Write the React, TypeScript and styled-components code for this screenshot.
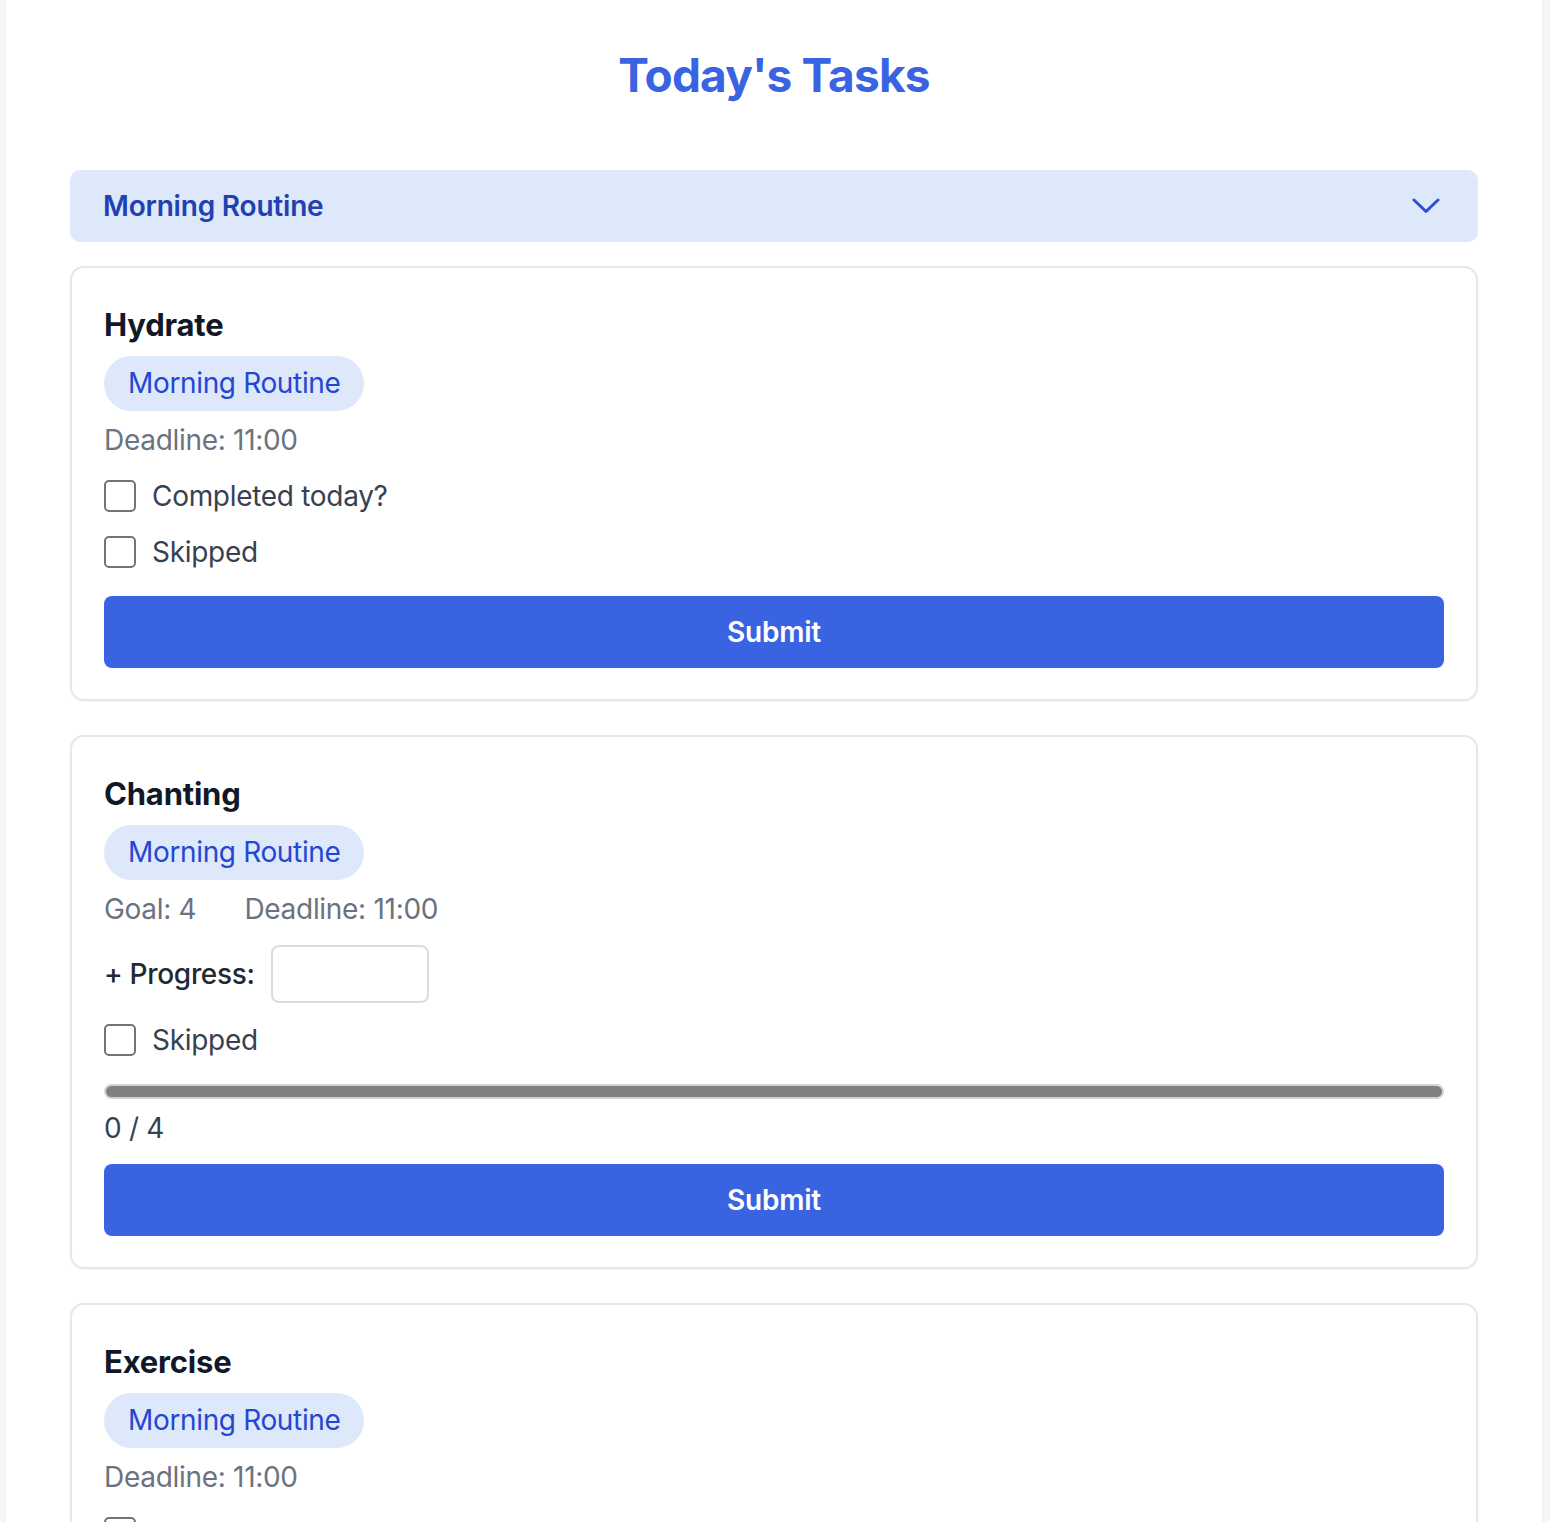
import React from "react";
import styled, { createGlobalStyle } from "styled-components";

type Task = {
  name: string;
  routine: string;
  deadline: string;
  goal?: number;
  progress?: number;
};

const tasks: Task[] = [
  { name: "Hydrate", routine: "Morning Routine", deadline: "11:00" },
  { name: "Chanting", routine: "Morning Routine", deadline: "11:00", goal: 4, progress: 0 },
  { name: "Exercise", routine: "Morning Routine", deadline: "11:00" },
];

function TaskCard({ task }: { task: Task }) {
  const counted = task.goal !== undefined;
  return (
    <Card>
      <TaskName>{task.name}</TaskName>
      <Tag>{task.routine}</Tag>
      <Meta>
        {counted && <span>Goal: {task.goal}</span>}
        <span>Deadline: {task.deadline}</span>
      </Meta>
      {counted ? (
        <ProgressRow>
          <ProgressLabel>+ Progress:</ProgressLabel>
          <NumberInput type="number" />
        </ProgressRow>
      ) : (
        <CheckRow>
          <Box type="checkbox" />
          Completed today?
        </CheckRow>
      )}
      <CheckRow>
        <Box type="checkbox" />
        Skipped
      </CheckRow>
      {counted && (
        <>
          <Track>
            <Fill style={{ width: `${((task.progress ?? 0) / (task.goal ?? 1)) * 100}%` }} />
          </Track>
          <Count>
            {task.progress} / {task.goal}
          </Count>
        </>
      )}
      <SubmitButton $tight={counted}>Submit</SubmitButton>
    </Card>
  );
}

export default function App() {
  return (
    <>
      <GlobalStyle />
      <Page>
        <Title>Today's Tasks</Title>
        <GroupHeader>
          <GroupName>Morning Routine</GroupName>
          <svg width="28" height="16" viewBox="0 0 28 16" fill="none">
            <polyline
              points="2,2 14,13.5 26,2"
              stroke="#2d4fd6"
              strokeWidth="3"
              strokeLinecap="round"
              strokeLinejoin="round"
            />
          </svg>
        </GroupHeader>
        <CardList>
          {tasks.map((t) => (
            <TaskCard key={t.name} task={t} />
          ))}
        </CardList>
      </Page>
    </>
  );
}

const GlobalStyle = createGlobalStyle`
  body {
    margin: 0;
    background: #f6f6f7;
    font-family: Inter, "Noto Sans", sans-serif;
  }
`;

const Page = styled.main`
  width: 1536px;
  min-height: 1522px;
  box-sizing: border-box;
  margin: 0 0 0 6px;
  padding: 47px 64px 48px;
  background: #ffffff;
  box-shadow: 0 0 4px rgba(0, 0, 0, 0.04);
`;

const Title = styled.h1`
  margin: 0 0 67px;
  text-align: center;
  font-size: 46px;
  line-height: 56px;
  font-weight: 700;
  letter-spacing: -0.8px;
  color: #3a63e2;
`;

const GroupHeader = styled.div`
  height: 72px;
  box-sizing: border-box;
  display: flex;
  align-items: center;
  justify-content: space-between;
  padding: 0 38px 0 33px;
  border-radius: 10px;
  background: #dde8fb;
`;

const GroupName = styled.span`
  font-size: 28px;
  font-weight: 600;
  letter-spacing: -0.2px;
  color: #2141b3;
`;

const CardList = styled.div`
  display: flex;
  flex-direction: column;
  gap: 34px;
  margin-top: 24px;
`;

const Card = styled.section`
  display: flex;
  flex-direction: column;
  align-items: flex-start;
  padding: 37px 32px 31px;
  border: 2px solid #e5e7eb;
  border-radius: 14px;
  background: #fff;
  box-shadow: 0 1px 2px rgba(0, 0, 0, 0.04);
`;

const TaskName = styled.h3`
  margin: 0 0 11px;
  font-size: 31px;
  line-height: 40px;
  font-weight: 700;
  letter-spacing: -0.2px;
  color: #111827;
`;

const Tag = styled.span`
  padding: 8px 23px 8px 24px;
  border-radius: 999px;
  background: #dde8fb;
  color: #2447d3;
  font-size: 28px;
  line-height: 39px;
  letter-spacing: -0.35px;
`;

const Meta = styled.div`
  display: flex;
  gap: 48px;
  margin-top: 8px;
  font-size: 28px;
  line-height: 42px;
  letter-spacing: -0.3px;
  color: #6b7280;
`;

const CheckRow = styled.label`
  display: flex;
  align-items: center;
  gap: 16px;
  margin-top: 14px;
  font-size: 28px;
  line-height: 42px;
  letter-spacing: -0.3px;
  color: #374151;
`;

const Box = styled.input`
  appearance: none;
  width: 32px;
  height: 32px;
  margin: 0;
  box-sizing: border-box;
  border: 2px solid #747474;
  border-radius: 5px;
  background: #fff;
`;

const ProgressRow = styled.div`
  display: flex;
  align-items: center;
  gap: 16px;
  margin: 15px 0 2px;
`;

const ProgressLabel = styled.span`
  font-size: 28px;
  line-height: 42px;
  font-weight: 500;
  letter-spacing: -0.3px;
  color: #1f2937;
`;

const NumberInput = styled.input`
  width: 158px;
  height: 58px;
  box-sizing: border-box;
  border: 2px solid #d9dce1;
  border-radius: 8px;
  font-size: 26px;
  font-family: inherit;
  padding: 0 10px;
`;

const Track = styled.div`
  align-self: stretch;
  height: 15px;
  box-sizing: border-box;
  margin-top: 23px;
  border: 2px solid #d3d3d6;
  border-radius: 999px;
  background: #808080;
  overflow: hidden;
`;

const Fill = styled.div`
  height: 100%;
  background: #3a63e2;
`;

const Count = styled.div`
  margin-top: 8px;
  font-size: 28px;
  line-height: 42px;
  letter-spacing: -0.3px;
  color: #374151;
`;

const SubmitButton = styled.button<{ $tight?: boolean }>`
  align-self: stretch;
  height: 72px;
  margin-top: ${(p) => (p.$tight ? "15px" : "23px")};
  border: none;
  border-radius: 8px;
  background: #3a63e2;
  color: #fff;
  font-family: inherit;
  font-size: 28px;
  font-weight: 600;
  letter-spacing: -0.2px;
`;
